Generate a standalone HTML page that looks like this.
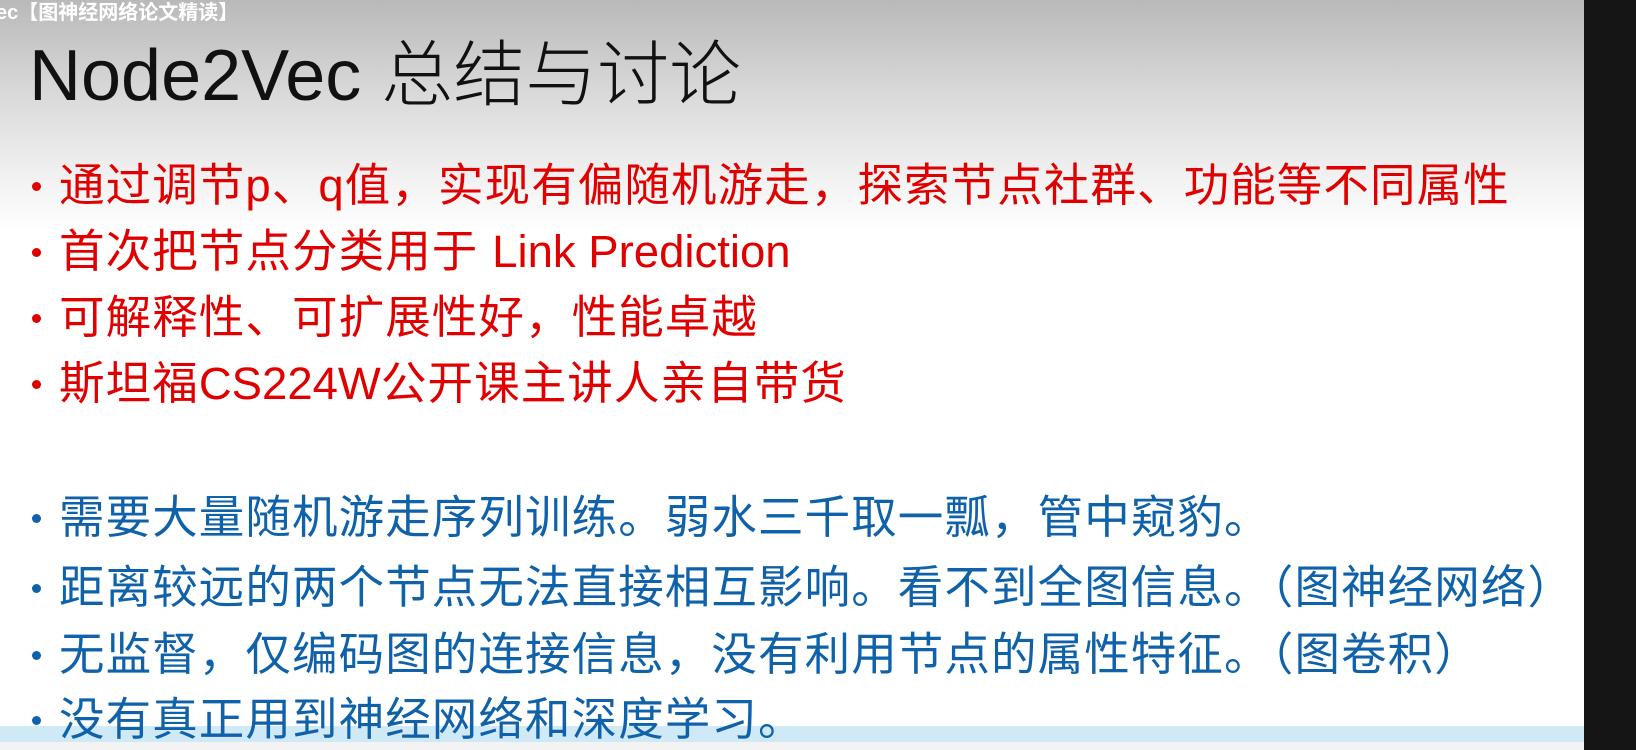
<!DOCTYPE html>
<html><head><meta charset="utf-8"><style>
html,body{margin:0;padding:0;}
body{width:1636px;height:750px;position:relative;overflow:hidden;background:#fff;font-family:"Liberation Sans","Noto Sans CJK SC",sans-serif;}
.bg{position:absolute;left:0;top:0;width:1584px;height:750px;background:linear-gradient(#b9b9b9 0px,#d8d8d8 90px,#f2f2f2 180px,#fff 230px,#fff 100%);}
.dark{position:absolute;left:1584px;top:0;width:52px;height:750px;background:#151515;}
.cap{position:absolute;left:-4px;top:-4px;color:#fff;font-size:20px;font-weight:bold;white-space:nowrap;}
.title{position:absolute;left:29px;top:16px;font-size:72px;letter-spacing:0;color:#111;white-space:nowrap;font-weight:300;}
.l{position:absolute;left:59px;font-size:45.5px;letter-spacing:1.1px;white-space:nowrap;line-height:1;}
.l i{font-style:normal;letter-spacing:0;}
.l b{position:absolute;left:-27px;top:19px;width:9px;height:9px;border-radius:50%;}
.r{color:#e10000;} .r b{background:#e10000;}
.u{color:#0f62aa;} .u b{background:#0f62aa;}
.sky{position:absolute;left:0;top:726px;width:1584px;height:24px;background:#cfe9f6;}
.strip{position:absolute;left:0;top:742px;width:1636px;height:8px;background:#f3f3f3;}
</style></head><body>
<div class="bg"></div>
<div class="sky"></div>
<div class="strip"></div>
<div class="dark"></div>
<div class="cap">ec【图神经网络论文精读】</div>
<div class="title">Node2Vec 总结与讨论</div>
<div class="l r" style="top:163px"><b></b>通过调节p、q值，实现有偏随机游走，探索节点社群、功能等不同属性</div>
<div class="l r" style="top:229px"><b></b>首次把节点分类用于 <i>Link Prediction</i></div>
<div class="l r" style="top:295px"><b></b>可解释性、可扩展性好，性能卓越</div>
<div class="l r" style="top:361px"><b></b>斯坦福<i>CS224W</i>公开课主讲人亲自带货</div>
<div class="l u" style="top:495px"><b></b>需要大量随机游走序列训练。弱水三千取一瓢，管中窥豹。</div>
<div class="l u" style="top:565px"><b></b>距离较远的两个节点无法直接相互影响。看不到全图信息。（图神经网络）</div>
<div class="l u" style="top:632px"><b></b>无监督，仅编码图的连接信息，没有利用节点的属性特征。（图卷积）</div>
<div class="l u" style="top:697px"><b></b>没有真正用到神经网络和深度学习。</div>
</body></html>
